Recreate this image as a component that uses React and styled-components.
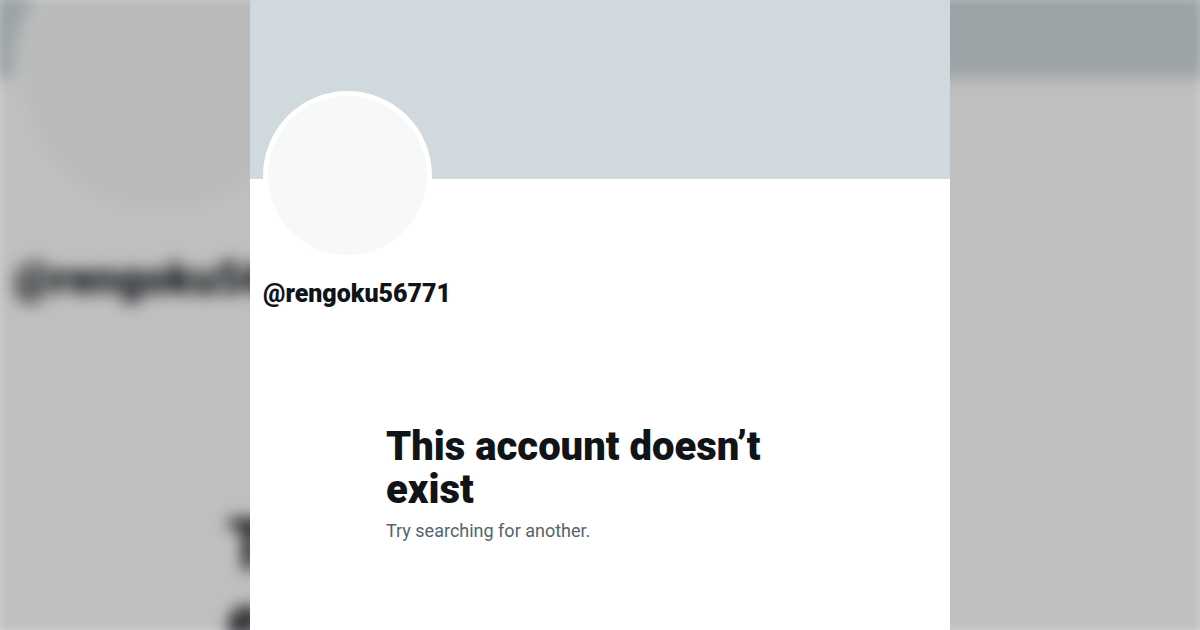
import React, { Component } from "react";
import styled, { createGlobalStyle } from "styled-components";

const GlobalStyle = createGlobalStyle`
  body {
    margin: 0;
    background-color: #fff;
    font-family: Roboto, "Liberation Sans", sans-serif;
  }
`;

// the backdrop is the same profile drawn larger
const size = (value) => ({ $ratio = 1 }) => `${Math.round(value * $ratio)}px`;

const BACKDROP_RATIO = 1.74;

const Page = styled.div`
  position: relative;
  min-height: 100vh;
  display: flex;
  justify-content: center;
  overflow: hidden;
`;

const Backdrop = styled.div`
  position: absolute;
  inset: -8px;
  display: flex;
  align-items: center;
  justify-content: center;
  overflow: hidden;
  background-color: #fff;
  filter: blur(8px) brightness(0.75);
`;

const Card = styled.div`
  position: relative;
  flex-shrink: 0;
  width: ${size(700)};
  max-width: ${({ $ratio }) => ($ratio ? "none" : "100%")};
  min-height: ${size(630)};
  background-color: #fff;
`;

const Banner = styled.div`
  height: ${size(179)};
  background-color: #cfd9de;
`;

const Header = styled.div`
  margin-top: -${size(88)};
  padding: 0 ${size(13)};
`;

const Avatar = styled.div`
  width: ${size(159)};
  height: ${size(159)};
  border: ${size(5)} solid #fff;
  border-radius: 50%;
  background-color: #f7f9f9;
`;

const Handle = styled.h2`
  margin: ${size(20)} 0 0;
  color: #0f1419;
  font-size: ${size(25)};
  font-weight: 900;
  line-height: ${size(28)};
`;

const Message = styled.div`
  width: ${size(400)};
  max-width: 90%;
  margin: ${size(117)} auto 0;
  padding-right: ${size(28)};
`;

const Title = styled.h1`
  margin: 0;
  color: #0f1419;
  font-size: ${size(40)};
  font-weight: 900;
  line-height: ${size(43)};
`;

const Hint = styled.p`
  margin: ${size(8)} 0 0;
  color: #536471;
  font-size: ${size(18)};
  line-height: ${size(24)};
`;

const Profile = ({ ratio, children }) => (
  <Card $ratio={ratio}>
    <Banner $ratio={ratio} />
    <Header $ratio={ratio}>
      <Avatar $ratio={ratio} />
      <Handle $ratio={ratio}>@rengoku56771</Handle>
    </Header>
    <Message $ratio={ratio}>
      <Title $ratio={ratio}>This account doesn’t exist</Title>
      {children}
    </Message>
  </Card>
);

class App extends Component {
  render() {
    return (
      <React.Fragment>
        <GlobalStyle />
        <Page>
          <Backdrop aria-hidden="true">
            <Profile ratio={BACKDROP_RATIO} />
          </Backdrop>
          <Profile>
            <Hint>Try searching for another.</Hint>
          </Profile>
        </Page>
      </React.Fragment>
    );
  }
}

export default App;
